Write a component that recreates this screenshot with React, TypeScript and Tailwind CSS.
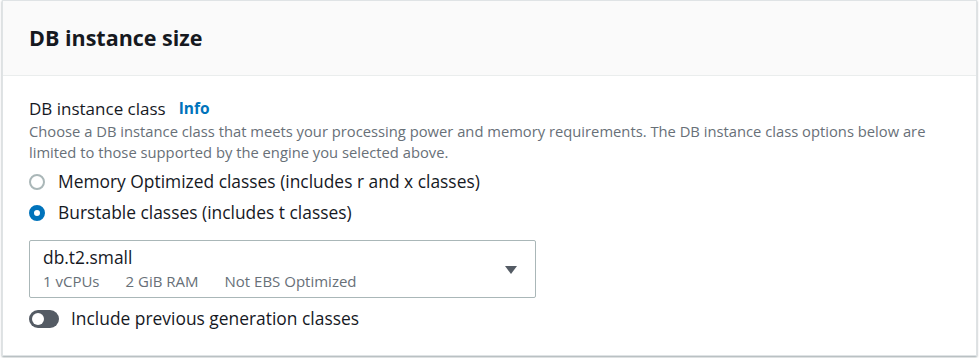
import React from "react";

export default function App() {
  return (
    <div className="w-[979px] h-[358px] bg-white" style={{ fontFamily: '"Open Sans", sans-serif' }}>
      <div className="ml-[2px] mr-[2px] h-[356px] border border-[#dfe3e5] shadow-[0_1px_2px_rgba(0,28,36,0.4)] bg-white flex flex-col">
        <div className="h-[75px] bg-[#fafafa] border-b border-[#eaeded] flex items-center px-[26px]">
          <h2 className="text-[21.5px] font-bold text-[#16191f] leading-none">DB instance size</h2>
        </div>
        <div className="px-[26px] pt-[21px] flex flex-col">
          <div className="flex items-center gap-[13px] text-[17px] text-[#16191f] leading-[23px]">
            <span>DB instance class</span>
            <span className="text-[15.5px] font-bold text-[#0073bb]">Info</span>
          </div>
          <p className="text-[14.75px] leading-[21px] text-[#687078] mt-[1px]">
            Choose a DB instance class that meets your processing power and memory requirements. The DB instance class options below are limited to those supported by the engine you selected above.
          </p>
          <div className="flex flex-col mt-[3px]">
            <label className="flex items-center gap-[13px] h-[31px]">
              <span className="w-[16px] h-[16px] rounded-full border-2 border-[#aab7b8] bg-white" />
              <span className="text-[17.4px] leading-[23px] text-[#16191f]">Memory Optimized classes (includes r and x classes)</span>
            </label>
            <label className="flex items-center gap-[13px] h-[31px]">
              <span className="w-[16px] h-[16px] rounded-full border-[5px] border-[#0073bb] bg-white" />
              <span className="text-[17.4px] leading-[23px] text-[#16191f]">Burstable classes (includes t classes)</span>
            </label>
          </div>
          <div className="mt-[12px] w-[507px] h-[58px] border border-[#aab7b8] rounded-[2px] flex items-center justify-between pl-[13px] pr-[17px]">
            <div className="flex flex-col">
              <span className="text-[17.4px] leading-[22px] text-[#16191f] -mt-[1px]">db.t2.small</span>
              <div className="flex gap-[26px] text-[15px] leading-[22px] text-[#687078] mt-[2px]">
                <span>1 vCPUs</span>
                <span>2 GiB RAM</span>
                <span>Not EBS Optimized</span>
              </div>
            </div>
            <svg width="14" height="10" viewBox="0 0 14 10" className="mt-[2px]">
              <path d="M1 1 L13 1 L7 9 Z" fill="#545b64" />
            </svg>
          </div>
          <div className="mt-[9px] flex items-center gap-[12px]">
            <span className="w-[30px] h-[18px] rounded-full bg-[#545b64] flex items-center px-[3px]">
              <span className="w-[12px] h-[12px] rounded-full bg-white" />
            </span>
            <span className="text-[17.4px] leading-[23px] text-[#16191f]">Include previous generation classes</span>
          </div>
        </div>
      </div>
    </div>
  );
}
